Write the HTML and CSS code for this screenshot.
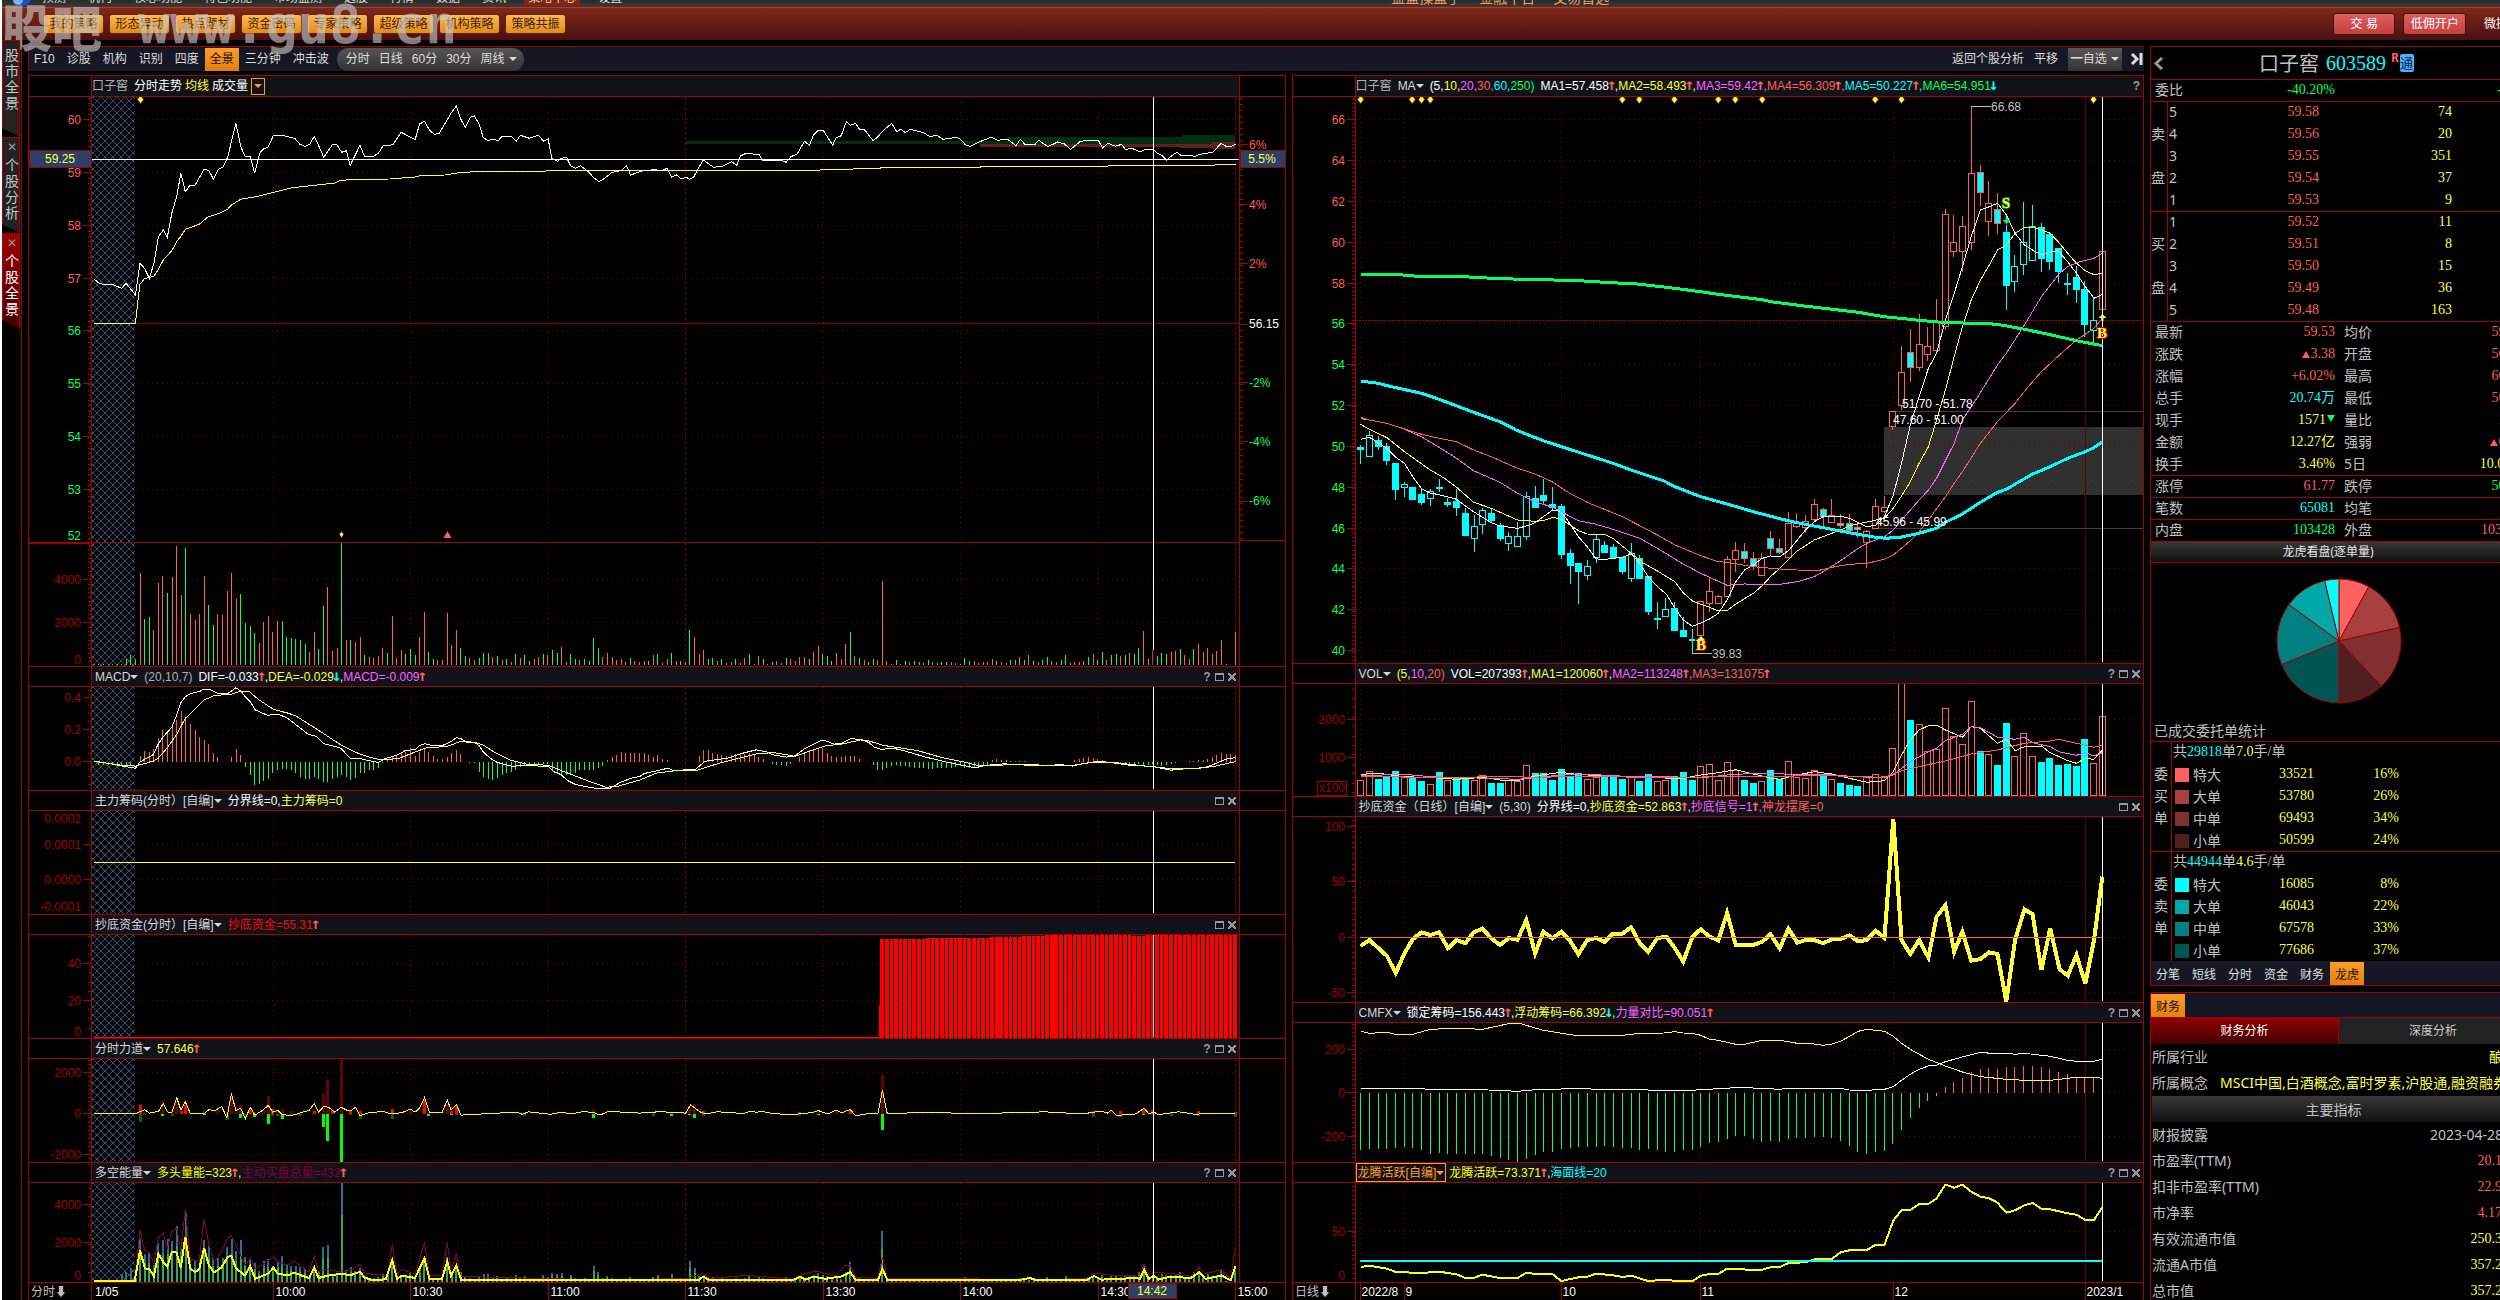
FILE: index.html
```html
<!DOCTYPE html>
<html lang="zh-CN">
<head>
<meta charset="utf-8">
<title>口子窖 603589 - 个股全景</title>
<link rel="stylesheet" href="styles.css">
</head>
<body>
<div class="page">
  <header class="top">
    <nav class="menu">
      <svg class="logo" width="20" height="20" viewBox="0 0 20 20"><circle cx="10" cy="10" r="10" fill="#1c50c8"/><circle cx="6" cy="14" r="5" fill="#7ab0f0"/></svg>
      <a href="#">预测</a><a href="#">机构</a><a href="#">核心功能</a><a href="#">特色功能</a><a href="#">市场监测</a><a href="#">选股</a><a href="#">行情</a><a href="#">数据</a><a href="#">资讯</a><a href="#" class="on">策略中心</a><a href="#">设置</a>
      <div class="slogan"><span>益盟操盘手</span><span>金融平台</span><span>交易首选</span></div>
    </nav>
    <div class="ribbon">
      <button>我的策略</button><button>形态异动</button><button>热点题材</button><button>资金密码</button><button>专家策略</button><button>超级策略</button><button>机构策略</button><button>策略共振</button>
      <div class="account"><button class="red">交 易</button><button class="red">低佣开户</button><a href="#">微操盘</a></div>
    </div>
    <div class="watermark"><b>股吧</b><span>www.gu8.cn</span></div>
  </header>

  <div class="body">
    <nav class="side">
      <a href="#" class="tab first">股市全景</a>
      <a href="#" class="tab"><i>✕</i>个股分析</a>
      <a href="#" class="tab active"><i>✕</i>个股全景</a>
    </nav>

    <main class="work">
      <div class="tools">
        <a href="#">F10</a><a href="#">诊股</a><a href="#">机构</a><a href="#">识别</a><a href="#">四度</a><a href="#" class="on">全景</a><a href="#">三分钟</a><a href="#">冲击波</a>
        <div class="pill"><a href="#">分时</a><a href="#">日线</a><a href="#">60分</a><a href="#">30分</a><a href="#">周线 <i class="caret"></i></a></div>
        <div class="tools-end"><a href="#">返回个股分析</a><a href="#">平移</a><button class="watch">━自选 <i class="caret"></i></button>
          <svg width="14" height="14" viewBox="0 0 14 14"><path d="M2 2L7 7L2 12M11 1V13" stroke="#ddd" stroke-width="3" fill="none"/></svg></div>
      </div>

      <div class="panels">
        <section class="panel left">
          <div class="head tall"><div class="bar"><span class="g">口子窖</span><span class="sp"></span><span>分时走势</span><span class="sp4"></span><span class="y">均线</span><span class="sp4"></span><span>成交量</span><button class="drop" aria-label="更多"><i class="caret"></i></button></div></div>
          <div class="chart c-price" data-chart="price"></div>
          <div class="head"><div class="bar"><span class="l">MACD<i class="caret"></i></span><span class="sp"></span><span class="g">(20,10,7)</span><span class="sp"></span><span>DIF=-0.033<em>↑</em>,</span><span class="y">DEA=-0.029<em class="dn">↓</em>,</span><span class="m">MACD=-0.009<em>↑</em></span><span class="ctl"><b>?</b><i class="box"></i><i class="x"></i></span></div></div>
          <div class="chart c-sub" data-chart="macd"></div>
          <div class="head"><div class="bar"><span class="l">主力筹码(分时）[自编]<i class="caret"></i></span><span class="sp"></span><span>分界线=0,</span><span class="y">主力筹码=0</span><span class="ctl"><i class="box"></i><i class="x"></i></span></div></div>
          <div class="chart c-sub" data-chart="chips"></div>
          <div class="head"><div class="bar"><span class="l">抄底资金(分时）[自编]<i class="caret"></i></span><span class="sp"></span><span class="rr">抄底资金=55.31<em>↑</em></span><span class="ctl"><i class="box"></i><i class="x"></i></span></div></div>
          <div class="chart c-sub" data-chart="fund"></div>
          <div class="head"><div class="bar"><span class="l">分时力道<i class="caret"></i></span><span class="sp"></span><span class="y">57.646<em>↑</em></span><span class="ctl"><b>?</b><i class="box"></i><i class="x"></i></span></div></div>
          <div class="chart c-sub" data-chart="force"></div>
          <div class="head"><div class="bar"><span class="l">多空能量<i class="caret"></i></span><span class="sp"></span><span class="yy">多头量能=323<em>↑</em>,</span><span class="p">主动买盘总量=432<em>↑</em></span><span class="ctl"><b>?</b><i class="box"></i><i class="x"></i></span></div></div>
          <div class="chart c-last" data-chart="energy"></div>
          <div class="times" data-chart="timeL"></div>
        </section>

        <section class="panel right">
          <div class="head tall"><div class="bar"><span class="g">口子窖</span><span class="sp"></span><span class="l">MA<i class="caret"></i></span><span class="sp"></span><span>(5,</span><span class="y">10,</span><span class="m">20,</span><span class="r">30,</span><span class="c">60,</span><span class="gn">250)</span><span class="sp"></span><span>MA1=57.458<em>↑</em>,</span><span class="y">MA2=58.493<em>↑</em>,</span><span class="m">MA3=59.42<em>↑</em>,</span><span class="r">MA4=56.309<em>↑</em>,</span><span class="c">MA5=50.227<em>↑</em>,</span><span class="gn">MA6=54.951<em class="dn">↓</em></span><span class="ctl"><b>?</b></span></div></div>
          <div class="chart c-day" data-chart="day"></div>
          <div class="head"><div class="bar"><span class="l">VOL<i class="caret"></i></span><span class="sp"></span><span class="y">(5,</span><span class="m">10,</span><span class="r">20)</span><span class="sp"></span><span>VOL=207393<em>↑</em>,</span><span class="y">MA1=120060<em>↑</em>,</span><span class="m">MA2=113248<em>↑</em>,</span><span class="r">MA3=131075<em>↑</em></span><span class="ctl"><b>?</b><i class="box"></i><i class="x"></i></span></div></div>
          <div class="chart c-vol" data-chart="vol"></div>
          <div class="head"><div class="bar"><span class="l">抄底资金（日线）[自编]<i class="caret"></i></span><span class="sp"></span><span class="l">(5,30)</span><span class="sp"></span><span>分界线=0,</span><span class="y">抄底资金=52.863<em>↑</em>,</span><span class="m">抄底信号=1<em>↑</em>,</span><span class="r">神龙摆尾=0</span><span class="ctl"><i class="box"></i><i class="x"></i></span></div></div>
          <div class="chart c-dfund" data-chart="dfund"></div>
          <div class="head"><div class="bar"><span class="l">CMFX<i class="caret"></i></span><span class="sp"></span><span>锁定筹码=156.443<em>↑</em>,</span><span class="y">浮动筹码=66.392<em class="dn">↓</em>,</span><span class="m">力量对比=90.051<em>↑</em></span><span class="ctl"><b>?</b><i class="box"></i><i class="x"></i></span></div></div>
          <div class="chart c-cmfx" data-chart="cmfx"></div>
          <div class="head"><div class="bar flush"><button class="picked">龙腾活跃[自编]<i class="caret"></i></button><span class="sp4"></span><span class="yy">龙腾活跃=73.371<em>↑</em>,</span><span class="c">海面线=20</span><span class="ctl"><b>?</b><i class="box"></i><i class="x"></i></span></div></div>
          <div class="chart c-last" data-chart="active"></div>
          <div class="times" data-chart="timeR"></div>
        </section>
      </div>
    </main>

    <aside class="quote">
      <section class="card">
        <h1><svg width="10" height="13" viewBox="0 0 10 13"><path d="M8 1L2 6.5L8 12" stroke="#999" stroke-width="3" fill="none"/></svg><span>口子窖</span><span class="code">603589</span><sup>R</sup><span class="hk">通</span></h1>
        <table class="kv one"><tr><th>委比</th><td class="gn">-40.20%</td><th></th><td class="gn">-735</td></tr></table>
        <table class="depth">
          <tr><th class="s" rowspan="5">卖<br>盘</th><th>5</th><td>59.58</td><td>74</td><td></td></tr>
          <tr><th>4</th><td>59.56</td><td>20</td><td></td></tr>
          <tr><th>3</th><td>59.55</td><td>351</td><td></td></tr>
          <tr><th>2</th><td>59.54</td><td>37</td><td></td></tr>
          <tr><th>1</th><td>59.53</td><td>9</td><td></td></tr>
        </table>
        <table class="depth">
          <tr><th class="s" rowspan="5">买<br>盘</th><th>1</th><td>59.52</td><td>11</td><td></td></tr>
          <tr><th>2</th><td>59.51</td><td>8</td><td></td></tr>
          <tr><th>3</th><td>59.50</td><td>15</td><td></td></tr>
          <tr><th>4</th><td>59.49</td><td>36</td><td></td></tr>
          <tr><th>5</th><td>59.48</td><td>163</td><td></td></tr>
        </table>
        <table class="kv">
          <tr><th>最新</th><td class="r">59.53</td><th>均价</th><td class="r">59.16</td></tr>
          <tr><th>涨跌</th><td class="r"><i class="up"></i>3.38</td><th>开盘</th><td class="r">56.70</td></tr>
          <tr><th>涨幅</th><td class="r">+6.02%</td><th>最高</th><td class="r">60.25</td></tr>
          <tr><th>总手</th><td class="c">20.74万</td><th>最低</th><td class="r">56.70</td></tr>
          <tr><th>现手</th><td class="y">1571<i class="down"></i></td><th>量比</th><td class="gn">1.82</td></tr>
          <tr><th>金额</th><td class="y">12.27亿</td><th>强弱</th><td class="r"><i class="up"></i>6.02</td></tr>
          <tr><th>换手</th><td class="y">3.46%</td><th>5日</th><td class="y">10.07%</td></tr>
        </table>
        <table class="kv"><tr><th>涨停</th><td class="r">61.77</td><th>跌停</th><td class="gn">50.54</td></tr></table>
        <table class="kv"><tr><th>笔数</th><td class="c">65081</td><th>均笔</th><td class="c">3</td></tr></table>
        <table class="kv"><tr><th>内盘</th><td class="gn">103428</td><th>外盘</th><td class="r">103965</td></tr></table>
        <h2>龙虎看盘(逐单量)</h2>
        <div class="pie"><svg width="126" height="126" viewBox="-63 -63 126 126" id="pie"></svg><p>已成交委托单统计</p></div>
        <table class="orders">
          <colgroup><col class="o1"><col class="o2"><col class="o3"><col class="o3"><col></colgroup>
          <tr><th class="s" rowspan="5">委<br>买<br>单</th><td class="sum" colspan="4">共<b class="c">29818</b>单<b class="y">7.0</b>手/单</td></tr>
          <tr><td><i class="sw b1"></i>特大</td><td>33521</td><td>16%</td><td></td></tr>
          <tr><td><i class="sw b2"></i>大单</td><td>53780</td><td>26%</td><td></td></tr>
          <tr><td><i class="sw b3"></i>中单</td><td>69493</td><td>34%</td><td></td></tr>
          <tr><td><i class="sw b4"></i>小单</td><td>50599</td><td>24%</td><td></td></tr>
        </table>
        <table class="orders">
          <colgroup><col class="o1"><col class="o2"><col class="o3"><col class="o3"><col></colgroup>
          <tr><th class="s" rowspan="5">委<br>卖<br>单</th><td class="sum" colspan="4">共<b class="c">44944</b>单<b class="y">4.6</b>手/单</td></tr>
          <tr><td><i class="sw s1"></i>特大</td><td>16085</td><td>8%</td><td></td></tr>
          <tr><td><i class="sw s2"></i>大单</td><td>46043</td><td>22%</td><td></td></tr>
          <tr><td><i class="sw s3"></i>中单</td><td>67578</td><td>33%</td><td></td></tr>
          <tr><td><i class="sw s4"></i>小单</td><td>77686</td><td>37%</td><td></td></tr>
        </table>
        <nav class="mini"><a href="#">分笔</a><a href="#">短线</a><a href="#">分时</a><a href="#">资金</a><a href="#">财务</a><a href="#" class="on">龙虎</a></nav>
      </section>
      <section class="card fin">
        <nav class="mini top2"><a href="#" class="on">财务</a></nav>
        <div class="two"><button class="on">财务分析</button><button>深度分析</button></div>
        <dl><div class="ind"><dt>所属行业</dt><dd class="y">酿酒</dd></div><div class="con"><dt>所属概念</dt><dd class="y">MSCI中国,白酒概念,富时罗素,沪股通,融资融券</dd></div></dl>
        <h3>主要指标</h3>
        <dl class="nums"><div class="date"><dt>财报披露</dt><dd>2023-04-28</dd></div><div><dt>市盈率(TTM)</dt><dd class="r">20.19倍</dd></div><div><dt>扣非市盈率(TTM)</dt><dd class="r">22.98倍</dd></div><div><dt>市净率</dt><dd class="r">4.175倍</dd></div><div><dt>有效流通市值</dt><dd class="y">250.35亿</dd></div><div><dt>流通A市值</dt><dd class="y">357.22亿</dd></div><div><dt>总市值</dt><dd class="y">357.22亿</dd></div></dl>
      </section>
    </aside>
  </div>
</div>
<script src="charts.js"></script>
</body>
</html>
```
FILE: styles.css
```css
* { box-sizing: border-box; }
body { margin: 0; background: #000; color: #fff; font: 12px/16px "Liberation Sans", "Noto Sans CJK SC", sans-serif; overflow: hidden; }
a { color: inherit; text-decoration: none; }
button { font: inherit; margin: 0; padding: 0; cursor: pointer; }
i, em { font-style: normal; }
.page { display: flex; flex-direction: column; width: calc(100% + 27px); height: 100vh; border-left: 2px solid #fff; }

.r { color: #ff5c5c; } .y { color: #ffff40; } .yy { color: #ffff00; } .c { color: #00ffff; } .m { color: #ff60ff; }
.gn { color: #00ff60; } .g { color: #b0b0b0; } .l { color: #d8d8d8; } .rr { color: #ff0000; } .p { color: #800030; }

.top { position: relative; flex: none; height: 46px; }
.menu { display: flex; align-items: flex-end; gap: 22px; height: 7px; padding: 0 0 1px 10px; background: linear-gradient(#2a2a2a, #3a3a3a); color: #ddd; }
.menu a, .slogan { line-height: 16px; white-space: nowrap; }
.logo { margin: 0 -12px 0 0; flex: none; }
.menu .on { background: #7d2618; color: #f0d0c0; padding: 0 4px; margin: 0 -4px; }
.slogan { display: flex; gap: 18px; margin-left: 747px; font-size: 14px; color: #e8a060; }
.ribbon { display: flex; align-items: center; gap: 5px; height: 33px; padding: 0 7px 0 41px; border-top: 1px solid #c03818; background: linear-gradient(#80281a, #4c0f12); }
.ribbon button { width: 61px; height: 20px; border: 1px solid #5a2808; border-radius: 3px; background: linear-gradient(#ffb850, #e08c18); color: #402008; line-height: 17px; }
.account { display: flex; align-items: center; gap: 8px; margin-left: auto; width: 187px; white-space: nowrap; }
.ribbon .red { width: 63px; height: 22px; background: linear-gradient(#e06060, #c04040); color: #fff; border-color: #401010; }
.account a { margin-left: 10px; }
.watermark { position: absolute; left: 0; top: 0; display: flex; color: #c8c8c8; opacity: .62; white-space: nowrap; pointer-events: none; }
.watermark b { font: 900 50px/50px "Noto Sans CJK SC", sans-serif; width: 136px; }
.watermark span { font: bold 53px/50px "DejaVu Sans Mono", monospace; }

.body { display: flex; flex: 1; min-height: 0; }
.side { width: 20px; margin-top: -6px; border-right: 1px solid #a00000; flex: none; }
.tab { display: block; width: 18px; height: 96px; padding: 0 2px; border: 1px solid #a00000; background: #222; color: #c8c8c8; font-size: 14px; line-height: 16px; word-break: break-all; clip-path: polygon(0 0, 100% 0, 100% 100%, 0 91%); }
.tab i { display: block; height: 19px; font-size: 12px; line-height: 19px; color: #999; text-align: right; }
.tab.first { height: 97px; padding-top: 6px; }
.tab.active { background: linear-gradient(#a00000, #400000); color: #fff; }
.work { display: flex; flex-direction: column; flex: 1; min-width: 0; margin: 0 6px; }
.tools { display: flex; align-items: center; height: 25px; border-top: 1px solid #a00000; border-left: 1px solid #a00000; background: #151824; flex: none; color: #ddd; padding-left: 5px; gap: 12px; white-space: nowrap; }
.tools .on, .mini .on { background: linear-gradient(#ff9c28, #e08010); color: #201000; padding: 0 5px; line-height: 23px; margin: 0 -6px; }
.caret { display: inline-block; border: 4px solid transparent; border-top-color: currentColor; border-bottom: 0; margin-left: 1px; vertical-align: 2px; }
.bar .caret { margin-left: 0; }
.pill { display: flex; gap: 9px; height: 23px; line-height: 23px; margin-left: -4px; padding: 0 7px 0 9px; border-radius: 12px; background: linear-gradient(#555, #333); }
.tools-end { display: flex; align-items: center; gap: 10px; margin-left: auto; }
.watch { height: 23px; width: 54px; border: 0; background: linear-gradient(#555, #333); color: #ddd; margin-right: -2px; }

.panels { display: flex; gap: 6px; flex: 1; min-height: 0; margin-top: 4px; }
.panel { display: flex; flex-direction: column; border: solid #a00000; border-width: 0 1px; min-width: 0; }
.left { flex: 1258 1 0; } .right { flex: 852 1 0; }
.head { flex: none; height: 21px; border: solid #a00000; border-width: 1px 0; }
.head.tall { height: 22px; }
.left .head { padding: 0 45px 0 62px; } .right .head { padding: 0 0 0 62px; }
.bar { display: flex; align-items: center; height: 100%; padding: 0 3px; background: #121318; border-left: 1px solid #a00000; white-space: nowrap; }
.left .bar { border-right: 1px solid #a00000; }
.tall .bar { padding-left: 0; }
.bar.flush { padding-left: 0; }
.sp { width: 6px; } .sp4 { width: 3px; }
.bar em { display: inline-block; width: 6px; color: #ff5c5c; font: bold 16px/14px "DejaVu Sans Mono", monospace; text-indent: -2px; }
.bar em.dn { color: #00ffff; }
.ctl { display: flex; align-items: center; gap: 4px; margin-left: auto; color: #999; }
.box { width: 9px; height: 8px; border: 2px solid #999; border-width: 2px 1px 1px; }
.x { width: 8px; height: 8px; background: linear-gradient(45deg, transparent 38%, #999 38% 62%, transparent 62%), linear-gradient(-45deg, transparent 38%, #999 38% 62%, transparent 62%); }
.drop { width: 14px; height: 17px; margin-left: 3px; border: 1px solid #ff9c28; background: none; color: #ff9c28; line-height: 12px; }
.picked { height: 19px; border: 1px solid #ff9c28; background: none; color: #ff9c28; padding: 0 1px; }
.chart { min-height: 0; overflow: hidden; }
.chart svg, .times svg { display: block; }
.c-price { flex: 569 1 0; } .c-sub { flex: 103 1 0; } .c-last { flex: 99 1 0; }
.c-day { flex: 566 1 0; } .c-vol { flex: 112 1 0; } .c-dfund { flex: 185 1 0; } .c-cmfx { flex: 139 1 0; }
.times { flex: none; height: 18px; border-top: 1px solid #a00000; overflow: hidden; }

.quote { flex: none; width: 377px; font: 14px/22px "Noto Sans", "Noto Sans CJK SC", sans-serif; color: #c0c0c0; }
.card { border-left: 1px solid #a00000; border-top: 1px solid #a00000; }
.quote h1 { display: flex; align-items: center; height: 32px; margin: 0; padding-left: 3px; font: 20px/32px "Noto Sans CJK SC", sans-serif; }
.quote h1 span:nth-of-type(1) { margin-left: 95px; }
.quote h1 .code { margin-left: 7px; font-family: "Liberation Serif", serif; color: #00ffff; }
.quote h1 sup { margin: 0 1px 10px 5px; font: bold 12px/12px "Noto Sans", sans-serif; color: #ff5c5c; }
.quote h1 .hk { width: 14px; height: 18px; border-radius: 2px; background: #50b0ff; color: #002040; font-size: 13px; line-height: 17px; }
table { border-spacing: 0; table-layout: fixed; width: 376px; box-shadow: inset 0 1px #a00000; }
.quote th, .quote td { padding: 0; font-weight: normal; height: 22px; line-height: 22px; white-space: nowrap; overflow: hidden; }
.quote td { text-align: right; font-family: "Liberation Serif", "Noto Sans CJK SC", serif; }
.quote th { text-align: left; }
.kv th { width: 56px; padding-left: 4px; } .kv td:nth-child(2) { width: 128px; } .kv th:nth-child(3) { width: 60px; padding-left: 9px; } .kv td:last-child { padding-right: 4px; }
.quote .kv th:first-child { padding-left: 4px; }
.quote .kv th:nth-child(3) { padding-left: 9px; }
.quote .kv td:last-child { padding-right: 4px; }
.depth th { width: 19px; }
.quote .depth th { padding-left: 1px; }
.quote .depth .s { width: 17px; padding: 0; line-height: 44px; border-right: 1px solid #a00000; }
.depth td { color: #ffff40; width: 133px; }
.depth th + td { color: #ff5c5c; width: 132px; }
.depth td:last-child { width: auto; }
.up, .down { display: inline-block; border: 4px solid transparent; margin-right: 1px; }
.up { border-bottom: 7px solid #ff5c5c; border-top: 0; } .down { border-top: 7px solid #00ff60; border-bottom: 0; margin: 0 0 2px 1px; }
.quote h2 { height: 22px; margin: 0; border: solid #a00000; border-width: 1px 0; background: linear-gradient(#383838, #101010); color: #e8e8e8; font: 12px/20px "Noto Sans", "Noto Sans CJK SC", sans-serif; text-align: center; padding-right: 22px; }
.pie { display: flex; flex-direction: column; align-items: center; height: 178px; padding-top: 15px; }
.pie p { align-self: stretch; margin: 17px 0 0; padding-left: 3px; line-height: 20px; }
.o1 { width: 21px; } .o2 { width: 57px; } .o3 { width: 85px; }
.quote .orders .s { padding: 22px 0 22px 3px; border-right: 1px solid #a00000; vertical-align: top; }
.orders td { color: #ffff40; }
.quote .orders td:nth-child(1) { color: #c0c0c0; text-align: left; padding-left: 3px; font-family: "Noto Sans CJK SC", sans-serif; }
.quote .orders .sum { text-align: left; color: #c0c0c0; padding-left: 1px; }
.orders b { font-weight: normal; font-family: "Liberation Serif", serif; }
.sw { display: inline-block; width: 14px; height: 14px; margin-right: 4px; vertical-align: -2px; }
.b1 { background: #ff6060; } .b2 { background: #a84040; } .b3 { background: #803030; } .b4 { background: #502020; }
.s1 { background: #00ffff; } .s2 { background: #00a8a8; } .s3 { background: #008080; } .s4 { background: #005454; }
.mini { display: flex; gap: 12px; height: 25px; padding: 1px 5px 0; background: #151824; border-bottom: 1px solid #a00000; color: #e0e0e0; font: 12px/23px "Noto Sans CJK SC", sans-serif; }
.fin { margin-top: 6px; }
.mini.top2 .on { margin: 0 -5px; }
.two { display: flex; }
.two button { width: 188px; height: 26px; border: 0; background: #222; color: #d0d0d0; font-size: 12px; }
.two .on { background: linear-gradient(#900000, #400000); color: #fff; border-right: 1px solid #a00000; }
.quote dl { margin: 0; padding-left: 1px; }
.quote dl div { display: flex; height: 26px; align-items: center; white-space: nowrap; }
.quote dd { margin: 0 4px 0 auto; }
.quote .ind dd { margin-right: 10px; }
.quote .con dd { margin: 0 0 0 12px; }
.quote .nums dd { font-family: "Liberation Serif", "Noto Sans CJK SC", serif; }
.quote .nums .date dd { margin-right: 24px; font-family: "Noto Sans", sans-serif; }
.quote h3 { height: 26px; margin: 0 0 0 1px; background: linear-gradient(#383838, #101010); font: 14px/26px "Noto Sans CJK SC", sans-serif; text-align: center; padding-right: 12px; }
```
FILE: charts.js
```js
// Every chart lives on a 2500 x 1300 board; each pane shows one window of it.
const DARK = '#a00000', GRID = '#6a0000', RED = '#ff5c5c', GREEN = '#00ff60', YEL = '#ffff40',
      CYAN = '#00ffff', MAG = '#ff60ff', WHITE = '#ffffff', LABEL = '#a00000';
const PANES = {
  price: [29, 97, 1256, 569], macd: [29, 687, 1256, 103], chips: [29, 811, 1256, 103],
  fund: [29, 935, 1256, 103], force: [29, 1059, 1256, 103], energy: [29, 1183, 1256, 99],
  timeL: [29, 1283, 1256, 17], day: [1293, 97, 850, 566], vol: [1293, 684, 850, 112],
  dfund: [1293, 817, 850, 185], cmfx: [1293, 1023, 850, 139], active: [1293, 1183, 850, 99],
  timeR: [1293, 1283, 850, 17]
};
// Units in which the series are recorded: origin and step for x and y.
const F = {
  a: [0, 2.45, 0, 3], b: [640, 2.45, 60, 3], s: [0, 2.45, 660, 2.45],
  d: [1280, 1.823, 400, 3], e: [1280, 1.823, 780, 3]
};
const fx = (f, x) => F[f][0] + x / F[f][1], fy = (f, y) => F[f][2] + y / F[f][3];
const minute = i => 135.5 + 4.582 * i, day = i => 1360.6 + 8.725 * i;

let out, X, Y;
const line = (x1, y1, x2, y2, c, w = 1, dash = '') =>
  out.push(`<line x1="${X(x1)}" y1="${Y(y1)}" x2="${X(x2)}" y2="${Y(y2)}" stroke="${c}" stroke-width="${w}"${dash && ` stroke-dasharray="${dash}"`}/>`);
const rect = (x, y, w, h, fill, stroke = 'none') =>
  out.push(`<rect x="${X(x)}" y="${Y(y)}" width="${X(x + w) - X(x)}" height="${Math.max(0, Y(y + h) - Y(y))}" fill="${fill}" stroke="${stroke}"/>`);
const text = (x, y, s, c, anchor = 'start') =>
  out.push(`<text x="${X(x)}" y="${Y(y) + 4}" fill="${c}" text-anchor="${anchor}">${s}</text>`);
const pts = (f, s) => s.trim().split(/[;\s]+/).map(p => { const [x, y] = p.split(','); return [fx(f, +x), fy(f, +y)]; });
const poly = (p, c, w = 1) =>
  out.push(`<polyline points="${p.map(q => X(q[0]).toFixed(1) + ',' + Y(q[1]).toFixed(1)).join(' ')}" fill="none" stroke="${c}" stroke-width="${w}"/>`);
const shift = (s, d) => s.trim().split(';').map(p => { const [x, y] = p.split(','); return (+x + d) + ',' + y; }).join(';');
const diamond = (x, y, r = 4) => out.push(`<path d="M${X(x)} ${Y(y) - r}l${r - 1} ${r}l${1 - r} ${r}l${1 - r} ${-r}z" fill="${YEL}" stroke="#c04000" stroke-width=".5"/>`);

function frameL(top, bottom, labels, minor) {
  rect(92, top, 43, bottom - top, 'url(#hatch)');
  for (const x of [273.5, 410.5, 548.5, 823.5, 960.5, 1098.5]) line(x, top, x, bottom, GRID, 1, '1 4');
  for (const x of [685.5, 1235.5]) line(x, top, x, bottom, GRID, 1, '3 2');
  for (const [s, y, c, tick = true] of labels) {
    text(81, y, s, c || LABEL, 'end');
    if (tick) { line(83, y, 91, y, DARK); line(137, y, 1235, y, GRID, 1, '1 4'); }
  }
  for (let y = minor[0]; y < bottom - 1; y += minor[1]) if (y > top) line(88, y, 91, y, DARK);
  line(91.5, top, 91.5, bottom, DARK); line(1239.5, top, 1239.5, bottom, DARK);
}
function frameR(top, bottom, labels, minor) {
  for (const x of [1360.5, 1404.5, 1561.5, 1700.5, 1893.5]) line(x, top, x, bottom, GRID, 1, '1 4');
  line(2085.5, top, 2085.5, bottom, '#600000');
  for (const [s, y, c, tick = true] of labels) {
    text(1345, y, s, c || LABEL, 'end');
    if (tick) { line(1347, y, 1355, y, DARK); line(1359, y, 2143, y, GRID, 1, '1 4'); }
  }
  for (let y = minor[0]; y < bottom - 1; y += minor[1]) if (y > top) line(1352, y, 1355, y, DARK);
  line(1355.5, top, 1355.5, bottom, DARK);
}

const VOLUME = ('17g 276r 138g 144g 105r 246r 267r 216g 264r 357r 210r 351g 153r 135r 153r 267r 180g 120g 153r 150r 222r 276r 198r 213g 126g 117g 96g 66r 129r 147r 99r 132r 132g 84g 81g 78g 75g 63g 39r 99r 48g 177g 234r 42r 51r 366g 75r 75g 69r 84r 30g 24r 21r 27r 51r 36g 147r 21r 45r 33g 48g 30g 84r 159r 39g 18g 15r 15r 156r 60r 105r 51g 27g 21r 15r 21g 36g 36g 24r 27g 15r ' +
  '18g 9r 33g 21r 30g 12g 18r 24r 33g 30r 45g 36g 54r 9r 33g 18g 15r 18g 12g 81g 51g 24r 36r 24r 15r 18r 9r 21g 12r 9r 12r 12g 30r 33g 6r 18r 36g 12r 12g 9r ' +
  '105g 84r 33r 45r 18g 21g 12r 18g 6r 9r 18g 6r 21r 33g 3r 27r 18g 3r 9g 12r 6r 21g 18r 12r 24r 24r 18g 39r 57r 33g 27g 12g 36r 18r 63r 99g 27r 21g 15r 9g 18g 15r 252r 12r 3r 15g 3g 12g 9r 12g 9g 6g 15g 9r 6g 9g 9g 9r 6r 3g 21g 12g 12r 6r 9r 9r 18r 12g 9r 6r 15g 15g 24r 15g 30r 12g 9r 15g 24g 12r 9r 15g 30g 6g 9r 9r 12r 24g 33r 15g 39g 15r 30g 33g 27r 30g 36r 33g 51g 102r 18r 45m 27g 36g 33g 39r 42r 48g 30r 18r 48g 63r 39r 51r 33r 42r 75r 3g 0g 99r').split(' ').map(s => [parseInt(s), s.slice(-1)]);

const MACD = [0,13,26,23,30,58,78,73,86,101,123,105,91,76,61,53,43,20,10,0,0,11,31,16,-14,-34,-58,-55,-48,-44,-28,-20,-19,-19,-22,-28,-37,-43,-43,-37,-43,-50,-50,-43,-37,-34,-37,-46,-40,-28,-27,-20,-22,-17,-4,4,10,16,20,24,32,13,23,30,23,13,5,5,10,20,28,18,0,-3,-4,-25,-38,-42,-45,-40,-32,-29,-25,-22,-14,-8,-6,-6,-5,-5,-7,-20,-28,-32,-33,-30,-27,-22,-20,-20,-22,-15,-10,3,10,16,24,20,20,22,22,20,15,10,15,6,3,0,0,0,0,0,0,13,27,27,20,18,15,13,15,18,20,18,20,18,12,6,0,-6,-8,-9,-10,-5,0,10,20,27,30,32,34,22,13,10,10,13,13,13,7,0,0,-8,-20,-22,-16,-12,-8,-10,-12,-14,-16,-15,-16,-18,-18,-16,-15,-15,-15,-14,-12,-16,-15,-14,-12,-12,-8,3,5,4,3,2,1,1,1,0,0,0,0,0,0,0,0,0,0,3,5,8,10,9,6,3,-2,-4,-4,-6,-6,-5,-6,-7,-8,-9,-7,-8,-10,-8,-5,-3,0,0,1,2,3,3,6,10,15,20,18,18,16];

// type, high, body top, body bottom, low. c filled, C hollow, r rising, m falling inside the rise
const CANDLES = `c 135 143 149 192|C 93 107 170 170|c 107 120 140 150|c 128 138 182 195|c 188 190 267 300|C 245 253 262 290|c 262 263 299 300|c 267 284 306 315|C 268 273 296 318|c 237 262 266 275|c 295 306 312 320|c 267 303 323 348|c 325 340 407 407|C 346 379 415 456|C 325 330 374 403|c 325 340 360 366|c 368 377 414 422|C 395 409 430 453|C 367 409 440 440|C 276 290 410 420|c 258 296 323 325|c 237 285 300 312|c 262 312 323 329|c 312 318 462 477|c 448 460 497 552|c 490 490 513 612|C 480 499 526 540|C 402 417 472 490|c 423 435 458 458|c 432 443 472 472|c 472 472 515 523|C 429 460 536 547|c 464 474 534 536|c 528 528 635 644|c 607 654 659 686|C 594 628 650 650|c 606 625 690 690|c 650 690 710 710|c 688 719 722 760|r 604 604 707 707|r 535 574 610 635|r 584 589 610 612|r 468 478 590 590|r 426 451 478 517|m 430 453 475 488|m 455 474 499 510|r 460 475 526 526|m 393 415 445 466|m 416 445 457 462|r 336 370 472 472|r 338 370 380 385|r 346 364 382 398|r 298 313 358 364|m 325 328 349 380|r 298 346 367 370|m 342 370 377 385|m 343 370 391 396|m 365 382 388 415|r 390 394 427 504|r 298 319 385 385|r 289 322 334 340|r 35 35 79 90|r -162 -83 16 30|m -212 -143 -98 -55|r -258 -167 -98 -86|r -220 -161 -137 -117|r -303 -235 -149 -145|r -572 -557 -221 -210|r -554 -473 -446 -428|r -552 -521 -446 -385|r -881 -680 -473 -450|m -705 -683 -623 -582|r -657 -590 -536 -492|m -620 -572 -530 -498|c -525 -503 -343 -270|C -435 -401 -355 -325|C -594 -473 -407 -375|C -585 -521 -419 -419|c -532 -518 -425 -385|c -500 -497 -415 -390|c -455 -455 -385 -350|c -380 -350 -347 -315|c -402 -369 -331 -290|c -358 -333 -226 -190|C -305 -239 -209 -173|r -485 -446 -271 -265`.split('|').map(s => s.split(' '));

const DAYVOL = '1141r 1114r 1137c 1132c 1114c 1132r 1134c 1143c 1153r 1117c 1141r 1132c 1132c 1141r 1126r 1150c 1150c 1141r 1143r 1096r 1120c 1120c 1141c 1108c 1132c 1120c 1138r 1132r 1132c 1126c 1138c 1132r 1144c 1123c 1144r 1141r 1129c 1117c 1141c 1099r 1093r 1141r 1087r 1111r 1141c 1150c 1144r 1111c 1138c 1084r 1132r 1135r 1111r 1126c 1138r 1149c 1155c 1159c 1132r 1123r 1130r 1045r 850r 961c 973r 1054r 1048r 925r 1010r 1033r 904r 1054c 1063r 1095c 970c 1070r 1000r 1069r 1087c 1075c 1095c 1092c 1099c 1018c 1090r 949r'.split(' ').map(s => [parseInt(s), s.slice(-1)]);

const cursorL = (a, b) => line(1153.5, a, 1153.5, b, WHITE);
const cursorR = (a, b) => line(2102.5, a, 2102.5, b, WHITE);

const DRAW = {
  price() {
    frameL(97, 542, [['60',119.5,RED],['59',172.5,RED],['58',225.5,RED],['57',278.5,RED],['56',330.5,GREEN],['55',383.5,GREEN],['54',436.5,GREEN],['53',489.5,GREEN],['52',535.5,GREEN,false]], [98.5, 5.3]);
    line(137, 323.5, 1239, 323.5, DARK, 1, '3 1');
    frameL(543, 666, [['4000',579.5],['2000',622.5],['0',660,'',false]], [545.5, 4.3]);
    line(29, 542.5, 1240, 542.5, DARK); line(29, 543, 91, 543, DARK, 2); line(1240, 540.5, 1285, 540.5, DARK);
    for (let y = 98.5; y < 540; y += 5.95) line(1240, y, 1243, y, DARK);
    for (const [s, y, c] of [['6%',144.5,RED],['4%',204.5,RED],['2%',263.5,RED],['56.15',324,WHITE],['-2%',382.5,GREEN],['-4%',441.5,GREEN],['-6%',501,GREEN]]) { line(1240, y, 1248, y, DARK); text(1249, y, s, c); }
    rect(686, 141, 322, 3, '#003010'); rect(1007, 137, 175, 7, '#003010'); rect(1182, 135, 53, 9, '#003010');
    rect(980, 144, 199, 3, '#602020'); rect(1179, 144, 33, 4, '#602020'); rect(1212, 142, 23, 7, '#602020');
    line(92, 159.5, 1239, 159.5, WHITE);
    poly(pts('a', '230,970;332,970;337,910;343,853;354,836;377,829;388,808;400,780;421,752;433,725;445,706;454,688;488,673;509,651;535,641;558,627;567,615;590,598;635,588;670,577;717,563;770,556;820,549;835,541;880,538;955,537;1017,531;1034,526;1090,525;1130,517;1200,514;1335,514;1343,511;1568,511')
      .concat(pts('b', '0,331;440,331;445,328;520,328;525,325;590,325;590,322;835,322;835,319;1145,319;1150,316;1408,316;1410,313;1459,313')), YEL);
    poly(pts('a', '230,837;243,850;254,853;275,853;298,865;309,850;332,885;343,790;354,805;366,835;377,790;388,710;400,690;410,712;421,640;433,590;443,520;454,575;466,555;478,555;500,508;512,512;523,538;535,508;547,500;558,470;567,425;578,370;590,440;600,468;613,470;624,520;636,460;645,447;657,441;670,406;690,406;722,415;735,433;747,439;759,433;770,409;780,435;793,472;815,433;825,433;837,457;849,452;858,496;882,436;893,469;915,469;927,460;939,436;950,438;963,433;983,397;1017,419;1028,372;1040,364;1052,390;1064,403;1076,400;1105,340;1118,319;1130,360;1140,382;1152,352;1162,348;1174,373;1184,413;1195,421;1210,418;1220,423;1230,409;1253,409;1265,424;1275,406;1297,415;1319,406;1332,424;1343,417;1352,476;1366,484;1375,475;1388,472;1398,497;1410,505;1422,497;1440,514;1455,533;1467,545;1478,538;1500,517;1522,512;1535,497;1545,525;1568,515')
      .concat(pts('b', '5,332;20,332;35,328;50,333;67,325;78,352;89,344;101,357;113,352;122,358;132,350;143,325;155,300;180,322;203,318;225,305;237,316;246,288;260,280;292,284;300,300;330,303;345,300;358,307;370,290;385,282;403,244;415,256;425,225;437,211;450,213;472,256;480,234;493,227;506,184;516,196;528,190;538,208;550,209;571,242;583,230;594,214;617,190;629,215;639,208;650,218;662,208;695,218;710,230;728,226;742,238;775,232;785,238;797,254;809,259;835,244;860,232;877,241;900,237;921,257;932,238;943,253;967,254;977,241;999,260;1023,246;1040,252;1055,268;1077,246;1090,241;1123,241;1133,264;1147,250;1165,259;1180,253;1190,269;1203,264;1225,275;1240,268;1258,268;1268,280;1280,287;1290,300;1300,290;1315,277;1327,287;1350,285;1358,290;1372,283;1403,277;1424,250;1436,259;1450,259;1459,252')), WHITE);
    VOLUME.forEach(([h, c], i) => line(minute(i), 665 - h / 3, minute(i), 665, c === 'g' ? GREEN : c === 'r' ? RED : '#ff00a0'));
    for (let i = 1; i < 10; i++) line(minute(-i), 665 - (i < 2 ? 10 : i < 3 ? 6 : 1), minute(-i), 665, i % 3 ? GREEN : RED);
    line(1153.5, 97, 1153.5, 650, WHITE);
    diamond(140.5, 99.5); diamond(341.5, 534.5, 3);
    out.push(`<path d="M${X(447.5)} ${Y(531)}l4 7h-8z" fill="${RED}"/>`);
    rect(29, 150.5, 62, 17, '#2b4066', DARK); text(60, 159, '59.25', YEL, 'middle');
    rect(1240, 150.5, 45, 17, '#2b4066', DARK); text(1262, 159, '5.5%', YEL, 'middle');
  },
  macd() {
    frameL(687, 790, [['0.4',697.5],['0.2',729.5],['0.0',761.5]], [690, 7.9]);
    MACD.forEach((h, i) => h && line(minute(i), 761.5, minute(i), 761.5 - h / 2.45, h > 0 ? RED : GREEN));
    for (let i = 1; i < 9; i++) line(minute(-i), 762, minute(-i), 765, GREEN);
    poly(pts('s', '230,248;270,254;300,260;332,265;343,250;375,232;388,205;400,188;421,165;433,135;443,105;454,90;466,83;478,79;488,78;500,71;512,71;535,82;558,82;567,76;578,68;590,76;601,90;613,102;625,122;645,131;657,136;670,133;685,134;705,143;727,160;755,182;775,187;793,205;825,213;836,217;848,230;859,241;882,241;905,247;927,251;945,241;971,234;995,221;1017,220;1028,210;1040,205;1062,210;1083,210;1105,200;1118,190;1130,193;1143,202;1165,203;1174,210;1184,225;1200,240;1218,251;1253,260;1300,259;1344,261;1355,273;1375,281;1390,295;1410,305;1450,313;1480,316;1495,314;1520,300;1545,290;1568,285;' +
      shift('10,278;40,272;68,265;80,270;135,269;150,256;160,248;215,240;245,230;285,220;310,225;325,232;358,238;380,235;405,216;425,206;443,198;455,198;475,206;495,204;515,193;540,194;560,202;575,214;590,219;620,216;645,222;700,238;760,252;800,260;820,264;850,258;895,254;915,257;960,256;1000,259;1030,256;1060,260;1085,254;1125,248;1160,252;1200,258;1258,261;1300,270;1340,266;1380,264;1410,254;1435,243;1459,239', 1568)), WHITE);
    poly(pts('s', '230,248;300,258;332,260;375,248;388,240;410,215;433,182;454,143;478,120;500,98;525,87;567,84;590,76;610,77;635,98;670,121;705,130;725,137;780,172;835,208;870,226;905,238;930,244;975,242;1010,228;1045,215;1095,212;1130,199;1165,202;1185,209;1210,225;1250,245;1290,255;1344,258;1380,273;1440,296;1485,312;1515,309;1568,294;' +
      shift('40,277;80,272;140,270;190,254;245,240;290,229;330,227;380,236;420,222;455,210;495,206;540,196;560,198;595,209;680,222;740,239;790,249;830,259;900,257;1060,258;1100,252;1160,251;1220,258;1300,266;1365,266;1410,260;1459,249', 1568)), YEL);
    cursorL(687, 789);
  },
  chips() {
    frameL(811, 914, [['0.0002',819,'',false],['0.0001',844.5],['0.0000',879.5],['-0.0001',907,'',false]], [999, 9]);
    line(94, 862.5, 1235, 862.5, YEL); cursorL(811, 913);
  },
  fund() {
    frameL(935, 1038, [['40',963.5],['20',1000.5],['0',1032,'',false]], [936, 9.2]);
    line(94, 1037.5, 880, 1037.5, '#ff0000', 2); line(879, 1037, 881, 975, '#ff0000');
    for (let i = 163; i <= 240; i++) {
      const t = i < 173 ? 684 : i < 187 ? 682 : i < 194 ? 680 : i < 199 ? 677 : i < 218 ? (i < 210 ? 674 : 672) : i < 221 ? 677 : i % 5 ? 674 : 672;
      rect(minute(i) - 2, 660 + t / 2.45, i === 163 ? 4 : 3.6, 104, '#ff0000');
      line(minute(i) - 2, 660 + t / 2.45, minute(i) + 2, 660 + t / 2.45, '#ff0000');
    }
    line(1153.5, 935, 1153.5, 1037, '#9adada');
  },
  force() {
    frameL(1059, 1162, [['2000',1072.5],['0',1113.5],['-2000',1154.5]], [1060.5, 4.1]);
    const D = '#600014', R = '#ff0000', G = '#00ff00', E = '#006420';
    for (const [i, up, uc, dn, dc] of [[1,21,R,20,E],[2,4,D,4,E],[6,33,D,6,G],[8,10,D,5,E],[9,30,D,0,G],[10,6,R,0,G],[11,21,R,0,G],[15,4,D,4,G],[18,8,D,0,G],[20,5,D,15,E],[21,46,D,0,E],[22,14,D,0,G],[23,22,D,11,G],[24,0,D,12,E],[25,14,R,0,G],[26,3,D,9,G],[28,8,D,0,G],[29,43,D,26,G],[30,11,R,5,E],[31,6,D,6,E],[32,11,D,14,G],[34,5,D,7,E],[36,4,D,5,E],[39,6,R,0,G],[41,48,D,33,G],[42,83,D,67,G],[43,9,R,0,G],[45,134,D,119,G],[47,7,R,4,E],[49,6,R,13,E],[56,11,R,13,E],[60,10,D,0,G],[63,36,R,0,G],[64,3,D,6,G],[68,20,D,0,G],[69,6,R,3,G],[70,21,R,4,E],[85,0,D,5,E],[100,11,D,11,G],[113,3,D,5,E],[117,3,D,5,G],[121,19,D,4,G],[122,23,D,11,G],[124,5,R,7,E],[145,4,R,7,E],[149,7,D,4,G],[153,6,D,0,G],[156,9,R,0,G],[163,94,D,40,G],[209,6,R,8,E],[213,8,D,0,G],[215,6,R,8,E],[220,11,R,4,G],[222,8,R,4,E],[226,3,R,7,E],[232,6,R,6,E],[240,4,R,9,E]]) {
      if (up) rect(minute(i) - 1.5, 1113.5 - up / 2.45, 3, up / 2.45, uc);
      if (dn) rect(minute(i) - 1.5, 1113.5, 3, dn / 2.45, dc);
    }
    poly(pts('s', '230,1111;332,1111;355,1102;366,1110;388,1106;400,1086;410,1107;421,1109;433,1072;443,1102;454,1083;466,1110;500,1112;512,1101;525,1105;543,1094;556,1121;567,1062;578,1104;590,1098;601,1124;613,1096;625,1115;645,1102;657,1091;668,1108;680,1103;691,1114;715,1116;745,1107;757,1104;770,1086;780,1108;793,1094;805,1096;820,1108;836,1096;850,1103;860,1104;871,1096;882,1116;905,1109;940,1106;955,1112;985,1109;1005,1100;1017,1108;1028,1098;1040,1072;1052,1108;1083,1109;1096,1078;1105,1102;1118,1090;1130,1115;1200,1111;1265,1108;1280,1113;1295,1107;1350,1113;1375,1108;1400,1112;1430,1106;1455,1109;1470,1115;1490,1106;1568,1110;' +
      shift('45,1107;80,1108;112,1110;124,1090;135,1098;147,1107;160,1112;190,1107;255,1111;268,1106;285,1108;300,1106;330,1112;380,1113;420,1109;437,1104;460,1112;480,1103;495,1109;515,1101;528,1117;560,1111;583,1111;594,1054;606,1112;700,1108;800,1111;940,1109;990,1107;1085,1112;1130,1105;1145,1110;1155,1103;1167,1116;1215,1112;1235,1098;1247,1112;1258,1107;1270,1114;1320,1107;1360,1113;1400,1110;1459,1111', 1568)), '#ffff00');
    cursorL(1059, 1161);
  },
  energy() {
    frameL(1183, 1282, [['4000',1204.5],['2000',1242.5],['0',1276,'',false]], [1188, 9.4]);
    VOLUME.forEach(([h, c], i) => {
      const b = h * (c === 'g' ? (h > 300 && i > 40 ? .68 : .48) : i === 163 ? .49 : .38) / 2.45;
      rect(minute(i) - 1, 1281.5 - b, 2, b, '#28708c'); rect(minute(i) - 1, 1281.5 - b * .65, 2, b * .65, '#30a868');
    });
    for (const [i, b] of [[-1, 13], [-2, 9], [-3, 7]]) rect(minute(i) - 1, 1281 - b, 2, b, '#28708c');
    poly(pts('s', '330,1521;343,1397;355,1447;366,1452;377,1480;388,1414;400,1405;410,1440;421,1400;433,1392;443,1447;454,1346;466,1468;488,1473;500,1370;512,1432;525,1475;543,1450;555,1420;567,1410;590,1460;601,1483;613,1465;625,1492;645,1480;670,1462;685,1478;705,1482;722,1473;757,1500;770,1460;780,1498;805,1493;835,1500;860,1495;882,1480;893,1503;950,1508;961,1432;973,1503;985,1493;1017,1505;1040,1427;1052,1508;1083,1508;1096,1427;1105,1495;1118,1457;1130,1511;1200,1512;1400,1517;1568,1517;' +
      shift('110,1516;155,1503;170,1515;265,1508;375,1517;393,1507;430,1497;455,1503;480,1508;503,1483;515,1482;528,1512;583,1515;594,1462;606,1515;900,1517;1000,1518;1095,1515;1112,1502;1150,1507;1225,1510;1235,1480;1247,1508;1258,1500;1300,1503;1350,1510;1370,1488;1385,1503;1425,1494;1447,1517;1459,1440', 1568)), '#800034');
    poly(pts('s', '230,1521;330,1521;343,1447;355,1490;366,1493;377,1510;388,1455;400,1475;410,1487;421,1450;433,1452;443,1490;454,1414;466,1490;478,1500;488,1493;500,1440;512,1485;525,1500;543,1488;558,1462;567,1460;578,1490;600,1508;613,1485;625,1516;645,1508;657,1503;670,1489;680,1503;705,1508;720,1501;750,1512;757,1514;770,1488;780,1514;805,1508;835,1504;860,1507;882,1499;893,1513;915,1520;945,1517;961,1470;973,1516;985,1508;1017,1514;1028,1490;1040,1466;1052,1516;1083,1516;1096,1473;1105,1508;1118,1484;1130,1518;1250,1518;1568,1520;' +
      shift('110,1520;145,1518;155,1511;170,1519;375,1519;393,1511;405,1518;425,1511;455,1516;495,1510;515,1500;528,1518;583,1519;594,1491;606,1519;930,1519;955,1514;970,1519;1095,1519;1112,1509;1130,1518;1180,1516;1210,1514;1225,1516;1235,1494;1247,1517;1258,1508;1270,1518;1300,1511;1350,1514;1370,1500;1385,1516;1425,1508;1447,1520;1459,1486', 1568)), '#ffff00', 2);
    cursorL(1183, 1281);
  },
  timeL() {
    text(31, 1292, '分时⬇', '#c0c0c0');
    line(91.5, 1283, 91.5, 1300, DARK); text(95, 1292, '1/05', WHITE);
    for (const [x, s] of [[273.5,'10:00'],[410.5,'10:30'],[548.5,'11:00'],[685.5,'11:30'],[823.5,'13:30'],[960.5,'14:00'],[1098.5,'14:30'],[1235.5,'15:00']]) { line(x, 1283, x, 1300, DARK); text(x + 2, 1292, s, WHITE); }
    rect(1128.5, 1283.5, 48, 15, '#2b4066', DARK); text(1152, 1291, '14:42', YEL, 'middle');
  },
  day() {
    rect(1884, 427, 259, 68, '#303030');
    const ys = [119.5,160.5,201.5,242.5,283.5,323.5,364.5,405.5,446.5,487.5,528.5,568.5,609.5,650.5];
    frameR(97, 663, ys.map((y, i) => [String(66 - 2 * i), y, i < 5 ? RED : GREEN]), [99, 4.1]);
    line(1356, 320.5, 2143, 320.5, DARK, 1, '2 1');
    line(1893, 411.5, 2143, 411.5, '#404040'); line(1876, 528.5, 2143, 528.5, '#404040');
    CANDLES.forEach(([t, h, a, b, l], i) => {
      const x = day(i), col = t === 'r' || t === 'm' ? RED : CYAN;
      const [yh, ya, yb, yl] = [h, a, b, l].map(v => fy('d', +v));
      line(x, yh, x, ya, i === 85 ? '#007080' : col); line(x, yb, x, yl, col);
      rect(x - 3, ya, 6, Math.max(1, yb - ya), t === 'c' || t === 'm' ? CYAN : 'none', col);
    });
    cursorR(97, 662);
    poly(pts('d', '147,118;163,112;195,145;211,172;227,190;242,230;258,266;274,279;290,284;322,298;338,318;353,335;385,368;401,378;433,385;449,378;465,368;497,330;513,335;528,370;544,410;560,440;576,476;590,479;607,475;624,472;640,462;656,490;671,530;688,560;704,582;720,625;735,660;752,679;767,669;783,657;799,640;815,600;831,545;847,510;863,495;879,475;894,468;911,470;927,452;943,420;958,390;974,365;990,350;1022,349;1038,355;1054,368;1070,380;1086,376;1102,350;1118,285;1133,190;1149,75;1165,-10;1182,-95;1197,-140;1213,-240;1229,-320;1244,-400;1260,-490;1277,-570;1293,-580;1308,-590;1324,-555;1340,-500;1357,-465;1372,-450;1388,-435;1404,-445;1418,-448;1436,-415;1452,-380;1468,-340;1484,-305;1499,-317'), WHITE);
    poly(pts('d', '147,73;163,88;195,113;227,155;274,210;300,235;322,262;353,307;385,325;433,360;465,364;480,362;497,352;513,358;544,392;560,402;592,403;607,415;640,460;663,490;688,513;720,545;735,578;752,603;767,613;783,622;799,633;815,632;831,612;863,580;879,557;894,530;911,505;943,453;974,420;1006,400;1022,390;1038,377;1070,366;1102,355;1118,325;1133,288;1149,245;1165,190;1182,140;1197,60;1213,-30;1229,-130;1244,-220;1260,-300;1277,-360;1293,-405;1308,-450;1324,-465;1340,-500;1357,-518;1372,-518;1388,-510;1404,-500;1421,-470;1436,-440;1452,-410;1468,-388;1484,-376;1499,-380'), YEL);
    poly(pts('d', '147,56;163,60;195,70;227,88;258,110;300,152;322,175;353,212;401,247;433,280;465,305;497,322;544,362;576,373;607,388;656,415;688,445;735,492;767,520;815,556;847,552;911,553;943,545;974,530;990,515;1022,482;1054,445;1070,430;1102,410;1118,390;1133,360;1165,300;1182,270;1197,235;1229,130;1244,60;1272,-10;1308,-105;1324,-140;1357,-225;1388,-310;1421,-380;1436,-400;1452,-412;1484,-425;1499,-440'), MAG);
    poly(pts('d', '147,52;163,60;195,70;227,87;258,103;290,115;322,125;353,150;385,170;433,205;465,222;497,246;528,280;560,307;624,350;656,377;688,405;720,435;767,467;799,485;815,487;863,500;911,507;943,510;980,512;1006,502;1038,493;1070,490;1102,478;1118,465;1149,422;1165,395;1182,360;1213,290;1229,250;1244,215;1277,130;1308,65;1340,10;1364,-40;1388,-85;1421,-135;1452,-180;1484,-215;1499,-245'), RED);
    poly(pts('d', '147,-57;179,-50;195,-43;258,-20;290,-2;353,37;401,65;433,92;480,122;513,140;560,165;607,190;640,210;700,243;720,260;767,290;815,312;863,335;911,356;943,368;990,383;1022,393;1054,403;1086,412;1105,415;1133,411;1165,400;1197,385;1213,367;1244,342;1277,307;1308,277;1324,268;1372,222;1404,200;1436,175;1468,155;1484,143;1499,125'), CYAN, 3);
    poly(pts('d', '147,-377;211,-377;250,-371;322,-371;400,-364;480,-361;545,-358;592,-353;650,-348;700,-339;767,-325;799,-317;879,-301;895,-295;960,-281;1054,-263;1102,-250;1165,-239;1213,-232;1277,-230;1308,-227;1357,-212;1404,-196;1452,-178;1499,-163'), GREEN, 3);
    for (const x of [147,241,258,274,624,655,719,799,830,879,1085,1133,1483]) diamond(fx('d', x), 99.5);
    line(1971, 106.5, 1991, 106.5, '#c0c0c0'); text(1991, 107, '66.68', '#c0c0c0');
    line(1692, 653.5, 1712, 653.5, '#c0c0c0'); text(1712, 654, '39.83', '#c0c0c0');
    text(1902, 404, '51.70 - 51.78', WHITE); text(1893, 420, '47.60 - 51.00', WHITE); text(1876, 522, '45.96 - 45.99', WHITE);
    const mark = (x, y, s, c, o) => out.push(`<text class="mark" x="${X(x)}" y="${Y(y) + 5}" fill="${c}" stroke="${o}" text-anchor="middle">${s}</text>`);
    mark(2006, 203, 'S', YEL, '#008030'); mark(2102, 333, 'B', YEL, '#c00000'); mark(1701, 645, 'B', YEL, '#c00000');
    out.push(`<path d="M${X(2006.5)} ${Y(224)}l-4 -4h3v-3h2v3h3z" fill="${GREEN}"/><path d="M${X(2102.5)} ${Y(314)}l-4 4h3v3h2v-3h3z" fill="${YEL}"/><path d="M${X(1701)} ${Y(636)}l-4 4h8z" fill="${YEL}"/>`);
  },
  vol() {
    frameR(684, 796, [['2000',719.5],['1000',757.5]], [689, 9.4]);
    text(1345, 788, 'x100', LABEL, 'end'); rect(1317.5, 781.5, 29, 14, 'none', DARK);
    DAYVOL.forEach(([t, c], i) => { const y = fy('d', t); rect(day(i) - 3, y, 6, 795 - y, c === 'c' ? CYAN : 'none', c === 'c' ? CYAN : RED); });
    cursorR(684, 795);
    poly(pts('d', '147,1123;179,1120;227,1130;280,1133;322,1138;370,1132;401,1140;433,1142;465,1128;513,1117;544,1124;600,1127;640,1132;700,1134;735,1135;767,1125;799,1118;831,1109;863,1122;894,1134;911,1138;943,1125;974,1115;1006,1122;1038,1135;1070,1147;1102,1142;1118,1115;1133,1065;1149,1020;1165,990;1182,977;1197,976;1213,990;1244,1012;1260,980;1277,985;1308,1030;1324,1018;1340,1052;1357,1040;1388,1038;1404,1058;1436,1082;1452,1090;1468,1075;1484,1078;1499,1050'), YEL);
    poly(pts('d', '147,1127;227,1123;274,1130;340,1133;401,1136;433,1138;465,1134;513,1124;560,1123;620,1128;700,1130;767,1134;815,1125;863,1120;943,1123;1006,1125;1054,1130;1102,1133;1118,1125;1149,1085;1182,1055;1197,1045;1213,1022;1244,1003;1260,980;1277,983;1308,1012;1340,1018;1357,1012;1372,1028;1404,1040;1420,1055;1452,1066;1468,1058;1484,1068;1499,1058'), MAG);
    poly(pts('d', '147,1130;300,1132;420,1130;465,1132;560,1129;700,1133;800,1130;900,1130;974,1126;1060,1130;1102,1132;1133,1112;1165,1100;1213,1083;1260,1062;1308,1050;1357,1030;1404,1023;1420,1018;1452,1030;1484,1042;1499,1035'), RED);
  },
  dfund() {
    frameR(817, 1002, [['100',826.5],['50',881.5],['0',937.5],['-50',992.5]], [820, 5.5]);
    cursorR(817, 1001);
    poly(pts('e', '147,498;163,480;195,528;211,580;227,520;242,478;258,457;274,465;290,457;306,505;322,480;338,490;353,457;369,446;385,475;401,495;417,474;433,479;449,420;465,520;480,455;497,475;513,455;528,480;544,523;560,480;576,474;592,486;607,461;624,461;640,442;656,490;671,515;688,474;704,470;720,505;735,545;752,470;767,448;783,470;799,481;815,399;831,495;863,495;879,485;894,463;911,505;927,446;943,488;958,480;974,480;990,490;1006,478;1022,477;1038,466;1054,484;1070,480;1086,452;1102,474;1118,116;1133,480;1149,522;1165,480;1182,533;1197,410;1213,376;1229,515;1244,455;1260,542;1277,537;1293,517;1308,522;1324,665;1340,480;1357,388;1372,403;1388,570;1404,445;1421,567;1436,587;1452,525;1468,611;1484,480;1499,290'), YEL, 4);
    line(1360, 937.5, 2102, 937.5, RED);
  },
  cmfx() {
    frameR(1023, 1162, [['200',1049.5],['0',1092.5],['-200',1136.5]], [1024, 4.3]);
    [1109,1106,1106,1106,1103,1101,1103,1109,1121,1118,1121,1121,1121,1121,1121,1127,1133,1139,1145,1136,1126,1115,1115,1106,1103,1100,1100,1100,1098,1100,1103,1103,1109,1106,1109,1115,1115,1109,1109,1100,1088,1085,1076,1068,1068,1076,1085,1082,1085,1076,1074,1074,1071,1070,1074,1082,1098,1115,1121,1115,1112,1091,1049,1013,983,962,947,921,905,893,875,867,863,867,860,860,857,857,860,867,875,882,890,890,893,878]
      .forEach((y, i) => line(day(i), 1092.5, day(i), fy('e', y), y > 937 ? GREEN : RED));
    cursorR(1023, 1161);
    poly(pts('e', '147,754;163,760;195,757;211,763;242,763;274,748;322,745;369,748;417,731;436,730;480,751;513,760;538,766;624,766;656,760;700,759;720,755;735,759;752,760;767,766;783,778;799,781;831,793;847,793;879,781;911,781;943,790;974,792;990,796;1006,792;1022,784;1054,754;1070,748;1102,754;1118,769;1133,790;1149,808;1182,838;1213,858;1244,876;1277,890;1324,898;1357,901;1404,901;1452,892;1484,892;1499,895'), YEL);
    poly(pts('e', '147,925;260,926;275,929;380,930;433,934;465,929;513,927;545,925;590,929;650,929;690,931;750,931;780,928;831,923;850,923;911,928;927,925;1022,925;1038,930;1070,931;1102,928;1118,920;1133,901;1149,883;1165,868;1182,858;1197,855;1213,845;1244,831;1277,817;1308,822;1324,820;1340,823;1357,820;1404,829;1436,841;1452,844;1484,844;1499,837'), WHITE);
  },
  active() {
    frameR(1183, 1282, [['50',1231.5],['0',1276,'',false]], [1186, 4.6]);
    cursorR(1183, 1281);
    poly(pts('e', '147,1461;163,1457;195,1466;211,1476;258,1479;290,1475;322,1483;338,1494;353,1494;369,1484;400,1494;433,1494;449,1478;465,1482;497,1483;513,1503;544,1492;560,1490;576,1481;607,1486;624,1491;640,1487;671,1503;704,1499;720,1503;752,1503;767,1487;783,1482;799,1482;815,1466;831,1467;863,1470;879,1469;894,1462;911,1461;927,1449;958,1447;974,1438;1006,1437;1022,1417;1038,1411;1070,1410;1086,1394;1102,1394;1118,1322;1133,1290;1149,1290;1165,1272;1182,1272;1197,1255;1213,1214;1229,1223;1244,1214;1260,1235;1277,1250;1293,1255;1308,1268;1324,1298;1340,1291;1357,1276;1372,1269;1388,1286;1404,1288;1436,1300;1452,1304;1468,1320;1484,1320;1499,1282'), '#ffff00', 2);
    line(1360, 1261, 2102, 1261, CYAN, 2);
  },
  timeR() {
    text(1295, 1292, '日线⬇', '#c0c0c0');
    line(1355.5, 1283, 1355.5, 1300, DARK);
    for (const [x, s] of [[1360.5,'2022/8'],[1404.5,'9'],[1561.5,'10'],[1700.5,'11'],[1893.5,'12'],[2085.5,'2023/1']]) { line(x, 1283, x, 1300, DARK); text(x + 1, 1292, s, WHITE); }
  }
};

function render() {
  document.querySelectorAll('[data-chart]').forEach(el => {
    const name = el.dataset.chart, [x0, y0, W, H] = PANES[name];
    const w = el.clientWidth, h = el.clientHeight;
    X = x => (x - x0) * w / W; Y = y => (y - y0) * h / H;
    out = [`<defs><pattern id="hatch" width="8" height="8" patternUnits="userSpaceOnUse"><path d="M0 0L8 8M8 0L0 8" stroke="#34507c" stroke-width="1"/></pattern></defs>`];
    DRAW[name]();
    el.innerHTML = `<svg width="${w}" height="${h}" font-size="12" font-family="Liberation Sans, Noto Sans CJK SC, DejaVu Sans, sans-serif"><style>line,rect,polyline{shape-rendering:crispEdges}.mark{font:bold 15px "Liberation Serif",serif;paint-order:stroke;stroke-width:2px}</style>${out.join('')}</svg>`;
  });
}
function pie() {
  const parts = [[8,'#ff6060'],[13.5,'#a84040'],[16.5,'#803030'],[12,'#502020'],[18.8,'#005454'],[16.2,'#008080'],[11.3,'#00a8a8'],[3.7,'#00ffff']];
  let a = 0, s = '';
  const at = v => { const t = v / 100 * 2 * Math.PI; return (62 * Math.sin(t)).toFixed(2) + ' ' + (-62 * Math.cos(t)).toFixed(2); };
  for (const [v, c] of parts) { s += `<path d="M0 0L${at(a)}A62 62 0 0 1 ${at(a + v)}Z" fill="${c}" stroke="#a00000"/>`; a += v; }
  document.getElementById('pie').innerHTML = s;
}
pie(); render();
window.addEventListener('resize', render);
```
